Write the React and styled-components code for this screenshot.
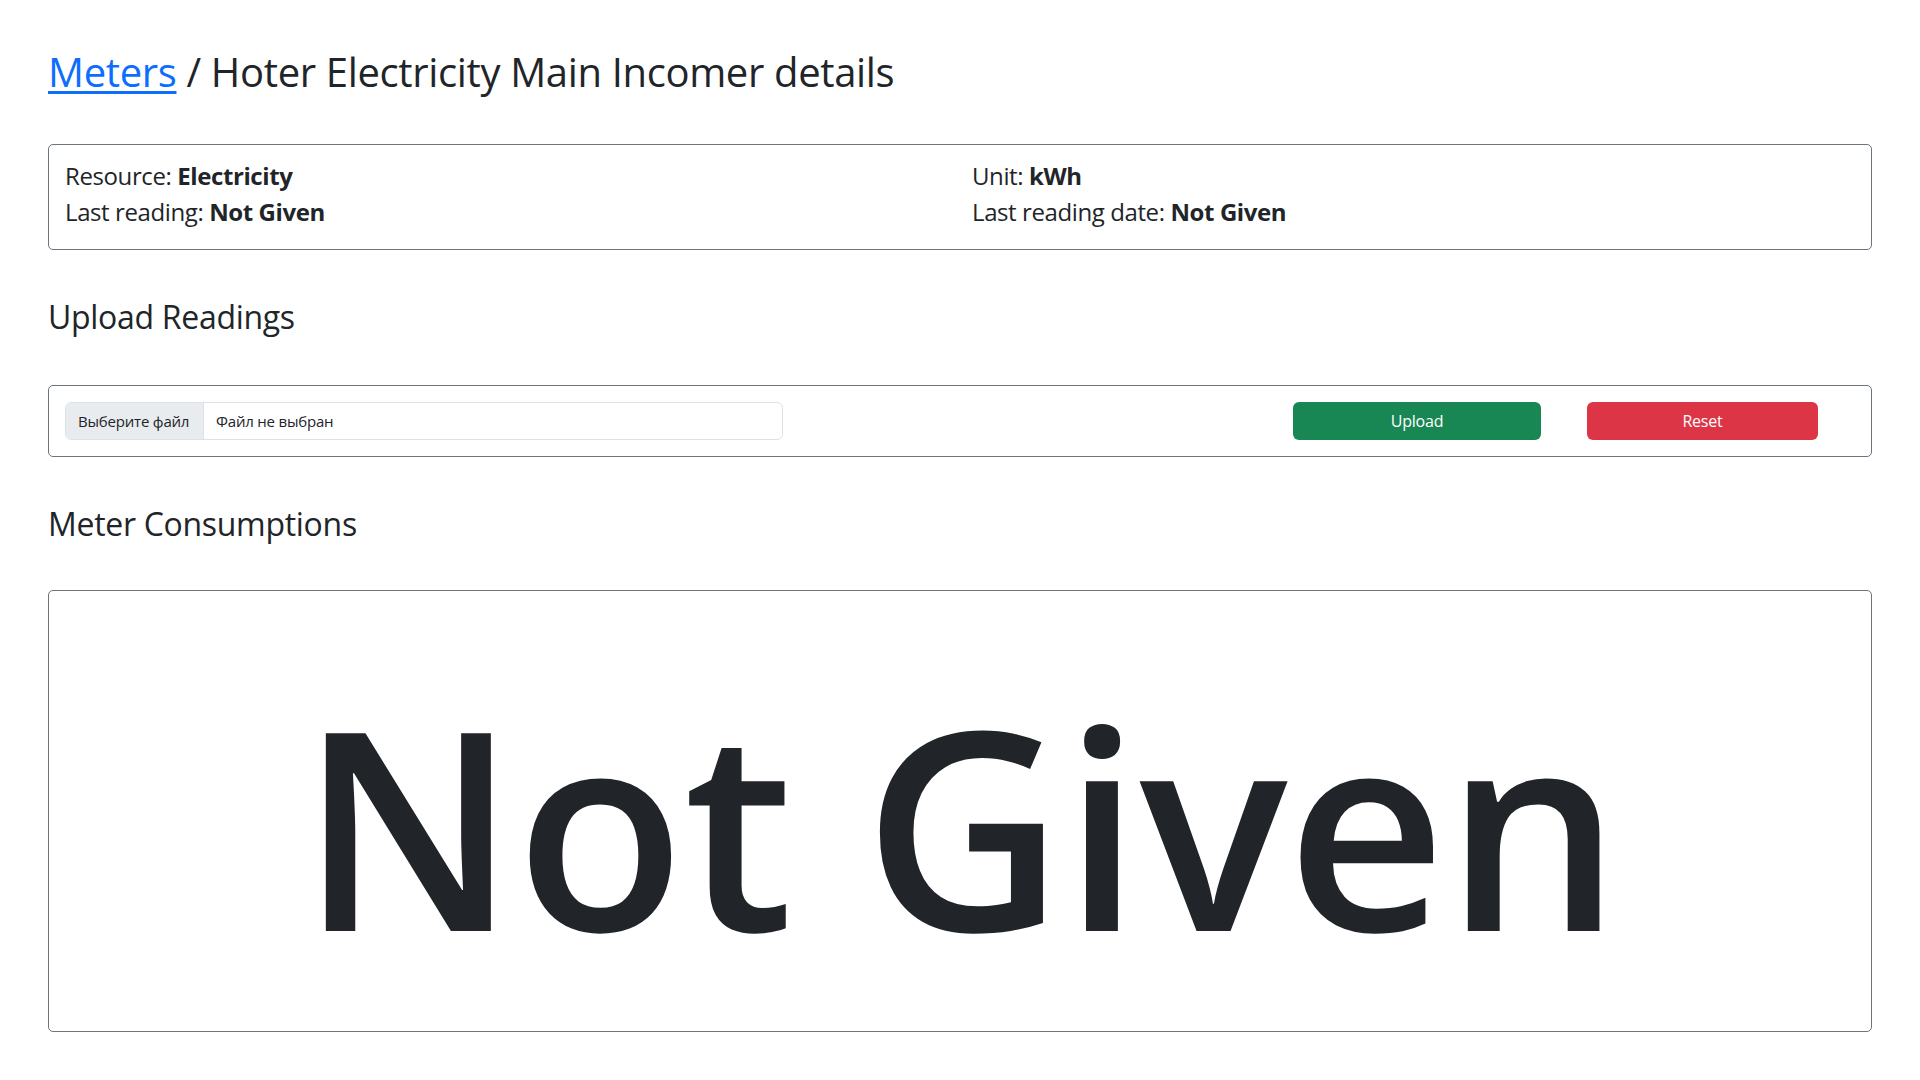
import React from 'react'
import styled, { createGlobalStyle } from 'styled-components'

const GlobalStyle = createGlobalStyle`
  html, body {
    margin: 0;
    padding: 0;
    background: #fff;
  }
  body {
    font-family: 'Open Sans', 'Noto Sans', 'Liberation Sans', sans-serif;
    color: #212529;
    font-size: 24px;
    line-height: 1.5;
  }
`

const Page = styled.div`
  display: flex;
  flex-direction: column;
  padding: 48px 48px 48px 48px;
`

const Title = styled.h1`
  margin: 0;
  font-size: 40px;
  font-weight: 500;
  line-height: 1.2;
  letter-spacing: -0.35px;
  a {
    color: #0d6efd;
    text-decoration: underline;
    text-decoration-thickness: 3px;
    text-underline-offset: 4px;
  }
`

const SectionTitle = styled.h2`
  margin: 48px 0 0;
  font-size: 32px;
  font-weight: 500;
  line-height: 1.2;
  letter-spacing: -0.3px;
`

const Card = styled.div`
  margin-top: ${p => p.$gap || 48}px;
  border: 1px solid #6c757d;
  border-radius: 5px;
  padding: ${p => p.$pad || '16px'};
`

const InfoGrid = styled.div`
  display: grid;
  grid-template-columns: 907px 1fr;
  padding: 0 0 4px;
  letter-spacing: -0.4px;
  b {
    font-weight: 700;
  }
`

const UploadRow = styled.div`
  display: flex;
  align-items: center;
`

const FileField = styled.label`
  display: flex;
  width: 718px;
  height: 38px;
  box-sizing: border-box;
  border: 1px solid #dee2e6;
  border-radius: 6px;
  overflow: hidden;
  font-size: 15px;
  line-height: 36px;
  letter-spacing: -0.2px;
  white-space: nowrap;
  cursor: pointer;
  input {
    display: none;
  }
`

const FileButton = styled.span`
  flex: none;
  width: 138px;
  box-sizing: border-box;
  background: #e9ecef;
  border-right: 1px solid #dee2e6;
  padding: 0 12px;
`

const FileName = styled.span`
  padding: 0 12px;
`

const Actions = styled.div`
  display: flex;
  gap: 46px;
  margin-left: auto;
  margin-right: 37px;
`

const Button = styled.button`
  width: ${p => p.$w}px;
  height: 38px;
  border: none;
  border-radius: 6px;
  background: ${p => p.$bg};
  color: #fff;
  font-family: inherit;
  font-size: 16px;
  letter-spacing: -0.2px;
  cursor: pointer;
`

const BigText = styled.div`
  text-align: center;
  font-size: 277px;
  font-weight: 600;
  line-height: 1.2;
  letter-spacing: -1px;
`

const InfoItem = ({ label, value }) => (
  <div>
    {label}: <b>{value}</b>
  </div>
)

const App = () => (
  <>
    <GlobalStyle />
    <Page>
      <Title>
        <a href="#meters">Meters</a> / Hoter Electricity Main Incomer details
      </Title>

      <Card $pad="13px 16px 15px">
        <InfoGrid>
          <InfoItem label="Resource" value="Electricity" />
          <InfoItem label="Unit" value="kWh" />
          <InfoItem label="Last reading" value="Not Given" />
          <InfoItem label="Last reading date" value="Not Given" />
        </InfoGrid>
      </Card>

      <SectionTitle>Upload Readings</SectionTitle>
      <Card $gap={49} $pad="16px 16px">
        <UploadRow>
          <FileField>
            <input type="file" />
            <FileButton>Выберите файл</FileButton>
            <FileName>Файл не выбран</FileName>
          </FileField>
          <Actions>
            <Button $w={248} $bg="#198754">Upload</Button>
            <Button $w={231} $bg="#dc3545">Reset</Button>
          </Actions>
        </UploadRow>
      </Card>

      <SectionTitle>Meter Consumptions</SectionTitle>
      <Card $gap={46} $pad="67px 16px 41px">
        <BigText>Not Given</BigText>
      </Card>
    </Page>
  </>
)

export default App
